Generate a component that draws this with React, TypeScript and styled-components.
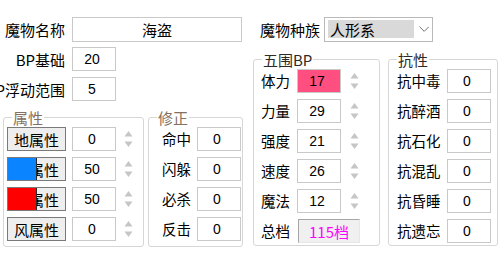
import React from 'react'
import styled, { createGlobalStyle } from 'styled-components'

const GlobalStyle = createGlobalStyle`
	html, body {
		margin: 0;
		padding: 0;
		background: #fff;
	}
	body {
		width: 502px;
		height: 254px;
		overflow: hidden;
		font-family: "Noto Sans CJK SC", "Microsoft YaHei", sans-serif;
		color: #000;
	}
`

const Page = styled.div`
	display: flex;
	width: 502px;
	height: 254px;
	box-sizing: border-box;
	padding-top: 17px;
`
const LeftColumn = styled.div`
	width: 253px;
	display: flex;
	flex-direction: column;
`
const RightColumn = styled.div`
	width: 249px;
	display: flex;
	flex-direction: column;
`
const FieldRow = styled.div<{ $mt?: number; $pl?: number; $gap?: number }>`
	display: flex;
	align-items: center;
	gap: ${p => p.$gap ?? 7}px;
	margin-top: ${p => p.$mt ?? 0}px;
	padding-left: ${p => p.$pl ?? 0}px;
`
const FieldLabel = styled.div`
	width: 65px;
	display: flex;
	justify-content: flex-end;
	white-space: nowrap;
	font-size: 15px;
	line-height: 1;
	flex: none;
`
const TextBox = styled.input<{ $w?: number; $h?: number; $bg?: string }>`
	box-sizing: border-box;
	width: ${p => p.$w ?? 44}px;
	height: ${p => p.$h ?? 24}px;
	margin: 0;
	padding: 0 4px 0 0;
	border: 1px solid #c9c9c9;
	background: ${p => p.$bg ?? '#fff'};
	text-align: center;
	font-family: "Liberation Sans", Arial, sans-serif;
	font-size: 14px;
	color: #000;
	outline: none;
	flex: none;
`
const NameBox = styled(TextBox)`
	padding: 0;
	font-family: "Noto Sans CJK SC", sans-serif;
	font-size: 15px;
`
const Select = styled.div`
	box-sizing: border-box;
	width: 109px;
	height: 25px;
	border: 1px solid #b9b9b9;
	padding: 2px 3px 3px 3px;
	display: flex;
	align-items: stretch;
	gap: 4px;
`
const SelectValue = styled.div`
	width: 90px;
	background: #d9d9d9;
	display: flex;
	align-items: center;
	padding-left: 2px;
	box-sizing: border-box;
	font-size: 15px;
	line-height: 1;
`
const Chevron = styled.svg`
	align-self: center;
	margin-left: 1px;
`
const GroupRow = styled.div<{ $mt: number; $pl: number; $gap: number }>`
	display: flex;
	align-items: flex-start;
	margin-top: ${p => p.$mt}px;
	padding-left: ${p => p.$pl}px;
	gap: ${p => p.$gap}px;
`
const Group = styled.fieldset<{ $w: number; $pb: number }>`
	box-sizing: border-box;
	width: ${p => p.$w}px;
	margin: 0;
	padding: 2px 0 ${p => p.$pb}px 0;
	min-width: 0;
	border: 1px solid #d7d7d7;
	border-radius: 3px;
`
const Legend = styled.legend<{ $color?: string }>`
	margin-left: 8px;
	padding: 0 1px;
	font-size: 15px;
	line-height: 15px;
	color: ${p => p.$color ?? '#2e2a28'};
`
const GroupBody = styled.div<{ $pl: number }>`
	display: flex;
	flex-direction: column;
	gap: 6px;
	padding-left: ${p => p.$pl}px;
`
const Row = styled.div<{ $gap: number }>`
	display: flex;
	align-items: center;
	height: 24px;
	gap: ${p => p.$gap}px;
`
const RowLabel = styled.div<{ $w: number; $size?: number }>`
	width: ${p => p.$w}px;
	flex: none;
	font-size: ${p => p.$size ?? 14.5}px;
	line-height: 1;
	white-space: nowrap;
`
const AttrButton = styled.button`
	position: relative;
	box-sizing: border-box;
	width: 59px;
	height: 24px;
	margin: 0;
	padding: 0;
	border: 1px solid #7a7a7a;
	background: #eeeeee;
	font-family: "Noto Sans CJK SC", sans-serif;
	font-size: 15px;
	line-height: 1;
	color: #000;
	flex: none;
`
const Swatch = styled.span<{ $color: string }>`
	position: absolute;
	left: 0;
	top: 0;
	bottom: 0;
	width: 28px;
	background: ${p => p.$color};
	border-right: 1px solid #2c2c2c;
`
const SpinIcon = styled.svg`
	flex: none;
	margin-left: 2px;
`
const TotalBox = styled.div`
	box-sizing: border-box;
	width: 62px;
	height: 24px;
	margin-left: 1px;
	background: #f0f0f0;
	border: 1px solid;
	border-color: #a6a6a6 #e6e6e6 #e6e6e6 #a6a6a6;
	display: flex;
	align-items: center;
	padding-left: 10px;
	font-size: 15px;
	line-height: 1;
	color: #ff00ff;
`

const Spinner = () => (
	<SpinIcon width="9" height="24" viewBox="0 0 9 24">
		<path d="M4.5 4 L8.5 9.5 L0.5 9.5 Z" fill="#c6c6c6" />
		<path d="M0.5 14.5 L8.5 14.5 L4.5 20 Z" fill="#c6c6c6" />
	</SpinIcon>
)

const attrs = [
	{ name: '地属性', shown: '0', color: '' },
	{ name: '水属性', shown: '50', color: '#0a84ff' },
	{ name: '火属性', shown: '50', color: '#ff0000' },
	{ name: '风属性', shown: '0', color: '' },
]
const fixes = ['命中', '闪躲', '必杀', '反击']
const stats = [
	{ name: '体力', value: '17', bg: '#ff4f80' },
	{ name: '力量', value: '29' },
	{ name: '强度', value: '21' },
	{ name: '速度', value: '26' },
	{ name: '魔法', value: '12' },
]
const resists = ['抗中毒', '抗醉酒', '抗石化', '抗混乱', '抗昏睡', '抗遗忘']

const App = () => {
	return (
		<Page>
			<GlobalStyle />
			<LeftColumn>
				<FieldRow>
					<FieldLabel>魔物名称</FieldLabel>
					<NameBox $w={170} $h={25} value="海盗" readOnly />
				</FieldRow>
				<FieldRow $mt={5}>
					<FieldLabel>BP基础</FieldLabel>
					<TextBox value="20" readOnly />
				</FieldRow>
				<FieldRow $mt={6}>
					<FieldLabel>BP浮动范围</FieldLabel>
					<TextBox value="5" readOnly />
				</FieldRow>
				<GroupRow $mt={9} $pl={3} $gap={4}>
					<Group $w={141} $pb={5}>
						<Legend $color="#84705f">属性</Legend>
						<GroupBody $pl={3}>
							{attrs.map(a => (
								<Row key={a.name} $gap={6}>
									<AttrButton>
										{a.color && <Swatch $color={a.color} />}
										{a.name}
									</AttrButton>
									<TextBox value={a.shown} readOnly />
									<Spinner />
								</Row>
							))}
						</GroupBody>
					</Group>
					<Group $w={95} $pb={5}>
						<Legend $color="#84705f">修正</Legend>
						<GroupBody $pl={13}>
							{fixes.map(f => (
								<Row key={f} $gap={6}>
									<RowLabel $w={29}>{f}</RowLabel>
									<TextBox value="0" readOnly />
								</Row>
							))}
						</GroupBody>
					</Group>
				</GroupRow>
			</LeftColumn>
			<RightColumn>
				<FieldRow $pl={7} $gap={6}>
					<RowLabel $w={58} $size={15}>魔物种族</RowLabel>
					<Select>
						<SelectValue>人形系</SelectValue>
						<Chevron width="11" height="6" viewBox="0 0 11 6">
							<polyline points="0.5,0.5 5.5,5.5 10.5,0.5" fill="none" stroke="#6a6a6a" strokeWidth="1" />
						</Chevron>
					</Select>
				</FieldRow>
				<GroupRow $mt={10} $pl={0} $gap={8}>
					<Group $w={127} $pb={2}>
						<Legend>五围BP</Legend>
						<GroupBody $pl={7}>
							{stats.map(s => (
								<Row key={s.name} $gap={7}>
									<RowLabel $w={29}>{s.name}</RowLabel>
									<TextBox value={s.value} $bg={s.bg} readOnly />
									<Spinner />
								</Row>
							))}
							<Row $gap={7}>
								<RowLabel $w={29}>总档</RowLabel>
								<TotalBox>115档</TotalBox>
							</Row>
						</GroupBody>
					</Group>
					<Group $w={110} $pb={2}>
						<Legend>抗性</Legend>
						<GroupBody $pl={8}>
							{resists.map(r => (
								<Row key={r} $gap={7}>
									<RowLabel $w={43}>{r}</RowLabel>
									<TextBox value="0" readOnly />
								</Row>
							))}
						</GroupBody>
					</Group>
				</GroupRow>
			</RightColumn>
		</Page>
	)
}

export default App
